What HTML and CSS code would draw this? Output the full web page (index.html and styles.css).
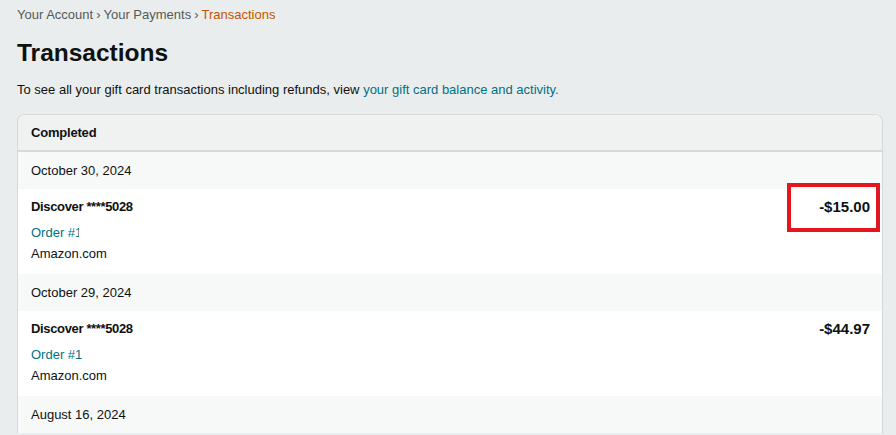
FILE: index.html
```html
<!DOCTYPE html>
<html>
<head>
<meta charset="utf-8">
<link rel="stylesheet" href="styles.css">
</head>
<body>
<div class="page">
  <nav class="crumbs">
    <a href="#" class="crumb">Your Account</a><span class="sep">›</span><a href="#" class="crumb">Your Payments</a><span class="sep">›</span><span class="crumb current">Transactions</span>
  </nav>
  <h1 class="title">Transactions</h1>
  <p class="intro">To see all your gift card transactions including refunds, view <a href="#" class="link">your gift card balance and activity.</a></p>
  <section class="card">
    <div class="card-head">Completed</div>
    <div class="date-row">October 30, 2024</div>
    <div class="txn">
      <div class="txn-info">
        <div class="method">Discover ****5028</div>
        <a href="#" class="order">Order #<span class="clip">1</span></a>
        <div class="merchant">Amazon.com</div>
      </div>
      <div class="amount marked">-$15.00<span class="highlight"></span></div>
    </div>
    <div class="date-row">October 29, 2024</div>
    <div class="txn">
      <div class="txn-info">
        <div class="method">Discover ****5028</div>
        <a href="#" class="order">Order #1</a>
        <div class="merchant">Amazon.com</div>
      </div>
      <div class="amount">-$44.97</div>
    </div>
    <div class="date-row">August 16, 2024</div>
  </section>
</div>
</body>
</html>
```
FILE: styles.css
```css
html, body {
  margin: 0;
  padding: 0;
  background: #eaeded;
  height: 100%;
  overflow: hidden;
}
body {
  font-family: "Liberation Sans", Arial, sans-serif;
  color: #0f1111;
  font-size: 13px;
}
.page {
  padding: 5px 13px 0 17px;
}
.crumbs {
  font-size: 13px;
  line-height: 19px;
  color: #565959;
}
.crumb {
  color: #565959;
  text-decoration: none;
}
.crumb.current {
  color: #c45500;
}
.sep {
  margin: 0 3px;
}
.title {
  margin: 12px 0 0;
  font-size: 24.5px;
  line-height: 34px;
  font-weight: 700;
}
.intro {
  margin: 10px 0 0;
  font-size: 13px;
  line-height: 20px;
}
.link {
  color: #007185;
  text-decoration: none;
}
.card {
  margin-top: 14px;
  background: #fff;
  border: 1px solid #d5d9d9;
  border-bottom: none;
  border-radius: 8px 8px 0 0;
}
.card-head {
  background: #f0f2f2;
  border-bottom: 2px solid #d5d9d9;
  border-radius: 8px 8px 0 0;
  padding: 0 13px;
  height: 35px;
  line-height: 35px;
  font-weight: 700;
  letter-spacing: -0.2px;
}
.date-row {
  background: #f7f8f8;
  height: 37px;
  line-height: 37px;
  padding: 0 13px;
}
.txn {
  display: flex;
  justify-content: space-between;
  align-items: flex-start;
  padding: 8px 12px 13px 13px;
  height: 64px;
}
.txn-info {
  display: flex;
  flex-direction: column;
}
.method {
  font-weight: 700;
  line-height: 20px;
  letter-spacing: -0.35px;
}
.order {
  color: #007185;
  text-decoration: none;
  line-height: 20px;
  margin-top: 6px;
}
.clip {
  display: inline-block;
  width: 4px;
  overflow: hidden;
  vertical-align: top;
}
.merchant {
  line-height: 20px;
  margin-top: 1px;
}
.amount {
  font-weight: 700;
  font-size: 15px;
  line-height: 20px;
}
.marked {
  position: relative;
}
.highlight {
  position: absolute;
  left: -32px;
  right: -10px;
  top: -14px;
  bottom: -15px;
  border: 4px solid #e3151e;
}
```
